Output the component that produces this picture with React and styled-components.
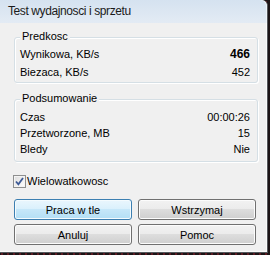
import React from "react";
import styled, { createGlobalStyle } from "styled-components";

const Global = createGlobalStyle`
  html, body {
    margin: 0;
    padding: 0;
    background: #2a1a1f;
    overflow: hidden;
  }
  body {
    font-family: "Liberation Sans", Arial, sans-serif;
    font-size: 11px;
    color: #000;
  }
`;

const Desktop = styled.div`
  width: 270px;
  height: 255px;
  background: radial-gradient(circle at 2px 2px, #5a1a22 1px, transparent 1.5px) 0 0 / 6px 9px, #1c1416;
`;

const Window = styled.div`
  width: 268px;
  height: 253px;
  box-sizing: border-box;
  display: flex;
  flex-direction: column;
  background: #f0f0f0;
  border-right: 1px solid #55585c;
  border-bottom: 1px solid #55585c;
  border-top-right-radius: 6px;
  overflow: hidden;
`;

const TitleBar = styled.div`
  height: 23px;
  flex: none;
  padding-left: 8px;
  line-height: 23px;
  font-size: 12px;
  letter-spacing: -0.4px;
  color: #1b1b1b;
  background: linear-gradient(#d5e2f0, #e3ebf4);
  border-top-right-radius: 6px;
  box-shadow: inset -1px 0 0 #eef3f8;
`;

const Client = styled.div`
  flex: 1;
  display: flex;
  flex-direction: column;
  padding: 0 9px 0 14px;
  box-shadow: inset -1px 0 0 #fafafa, inset 0 -1px 0 #fafafa;
`;

const Group = styled.div`
  position: relative;
  margin-top: ${(p) => p.$top}px;
  border: 1px solid #d5dfe5;
  border-radius: 3px;
  box-shadow: inset 1px 1px 0 #fff, 1px 1px 0 #fff;
  padding: ${(p) => p.$pad};
  line-height: ${(p) => p.$lh}px;
`;

const Legend = styled.span`
  position: absolute;
  top: -8px;
  left: 5px;
  padding: 0 2px;
  line-height: 13px;
  background: #f0f0f0;
`;

const Row = styled.div`
  display: flex;
  justify-content: space-between;
`;

const Value = styled.span`
  font-weight: ${(p) => (p.$bold ? 700 : 400)};
  font-size: ${(p) => (p.$bold ? "12px" : "11px")};
`;

const CheckRow = styled.label`
  display: flex;
  align-items: center;
  gap: 1px;
  margin: 13px 0 0 -1px;
  height: 13px;
  line-height: 13px;
`;

const CheckBox = styled.span`
  width: 13px;
  height: 13px;
  box-sizing: border-box;
  border: 1px solid #8e8f8f;
  background: linear-gradient(135deg, #dcdcdc, #ffffff);
  box-shadow: inset 0 0 0 1px #f4f4f4;
  display: flex;
  align-items: center;
  justify-content: center;
`;

const ButtonGrid = styled.div`
  margin-top: 11px;
  width: 242px;
  display: grid;
  grid-template-columns: 118px 118px;
  grid-auto-rows: 21px;
  gap: 4px 6px;
`;

const Button = styled.button`
  box-sizing: border-box;
  margin: 0;
  padding: 0;
  height: 21px;
  font-family: "Liberation Sans", Arial, sans-serif;
  font-size: 11px;
  color: #000;
  border-radius: 3px;
  border: 1px solid ${(p) => (p.$primary ? "#3c7fb1" : "#707070")};
  background: ${(p) =>
    p.$primary
      ? "linear-gradient(#eaf6fd 0%, #d9f0fc 50%, #c6e7f9 50%, #b3dff5 100%)"
      : "linear-gradient(#f2f2f2 0%, #ebebeb 50%, #dddddd 50%, #cfcfcf 100%)"};
  box-shadow: inset 0 0 0 1px ${(p) => (p.$primary ? "#f4fbfe" : "#fcfcfc")};
`;

export default function App() {
  return (
    <>
      <Global />
      <Desktop>
        <Window>
          <TitleBar>Test wydajnosci i sprzetu</TitleBar>
          <Client>
            <Group $top={14} $pad="7px 7px 1px 5px" $lh={18}>
              <Legend>Predkosc</Legend>
              <Row>
                <span>Wynikowa, KB/s</span>
                <Value $bold>466</Value>
              </Row>
              <Row>
                <span>Biezaca, KB/s</span>
                <Value>452</Value>
              </Row>
            </Group>
            <Group $top={16} $pad="9px 7px 4px 5px" $lh={16}>
              <Legend>Podsumowanie</Legend>
              <Row>
                <span>Czas</span>
                <Value>00:00:26</Value>
              </Row>
              <Row>
                <span>Przetworzone, MB</span>
                <Value>15</Value>
              </Row>
              <Row>
                <span>Bledy</span>
                <Value>Nie</Value>
              </Row>
            </Group>
            <CheckRow>
              <CheckBox>
                <svg width="9" height="9" viewBox="0 0 9 9">
                  <path d="M1 4.5 L3.4 7.3 L8 1" fill="none" stroke="#3d5a96" strokeWidth="1.8" />
                </svg>
              </CheckBox>
              <span>Wielowatkowosc</span>
            </CheckRow>
            <ButtonGrid>
              <Button $primary>Praca w tle</Button>
              <Button>Wstrzymaj</Button>
              <Button>Anuluj</Button>
              <Button>Pomoc</Button>
            </ButtonGrid>
          </Client>
        </Window>
      </Desktop>
    </>
  );
}
